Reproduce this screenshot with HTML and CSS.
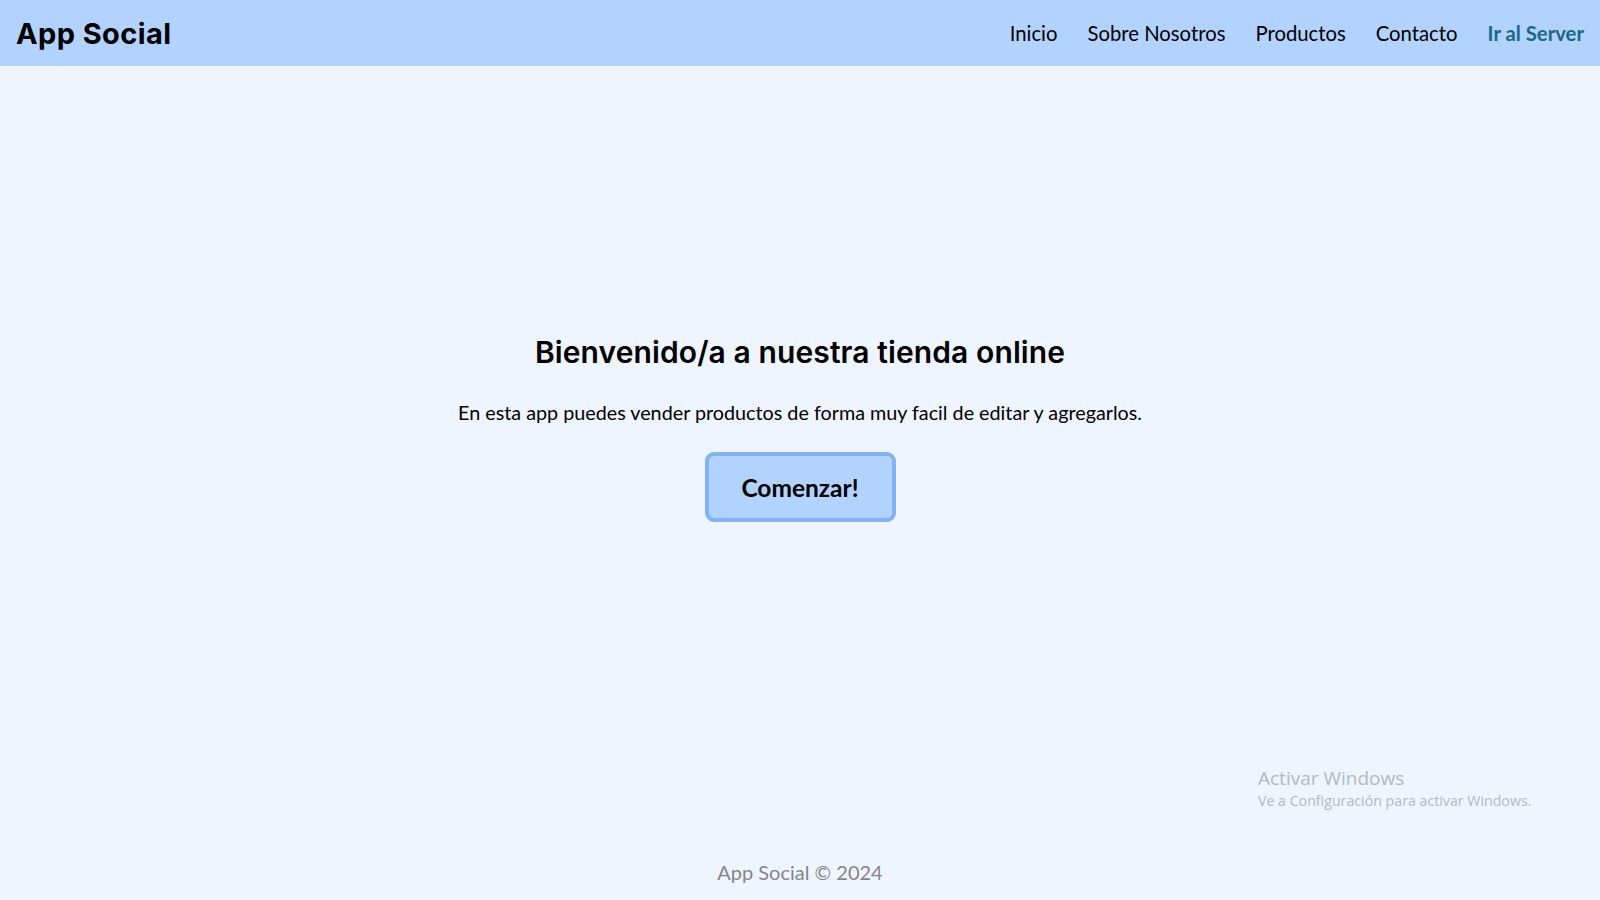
FILE: index.html
```html
<!DOCTYPE html>
<html lang="es">
<head>
<meta charset="utf-8">
<title>App Social</title>
<link rel="stylesheet" href="styles.css">
</head>
<body>
<header class="topbar">
  <div class="brand">App Social</div>
  <nav class="nav">
    <a class="nav-link" href="#">Inicio</a>
    <a class="nav-link" href="#">Sobre Nosotros</a>
    <a class="nav-link" href="#">Productos</a>
    <a class="nav-link" href="#">Contacto</a>
    <a class="nav-link nav-server" href="#">Ir al Server</a>
  </nav>
</header>
<main class="hero">
  <h1 class="hero-title">Bienvenido/a a nuestra tienda online</h1>
  <p class="hero-text">En esta app puedes vender productos de forma muy facil de editar y agregarlos.</p>
  <button class="hero-btn">Comenzar!</button>
</main>
<footer class="footer">App Social © 2024</footer>
<div class="watermark">
  <div class="wm-title">Activar Windows</div>
  <div class="wm-sub">Ve a Configuración para activar Windows.</div>
</div>
</body>
</html>
```
FILE: styles.css
```css
* { box-sizing: border-box; }
html, body { margin: 0; padding: 0; }
body {
  background: #eef5ff;
  font-family: Lato, "Liberation Sans", sans-serif;
  color: #000;
  min-height: 100vh;
  display: flex;
  flex-direction: column;
}
.topbar {
  height: 66px;
  background: #b2d2ff;
  display: flex;
  align-items: center;
  justify-content: space-between;
  padding: 0 16px;
}
.brand {
  font-family: Inter, "Open Sans", sans-serif;
  font-weight: 700;
  font-size: 29px;
  letter-spacing: 0.4px;
}
.nav {
  display: flex;
  gap: 30px;
}
.nav-link {
  color: #000;
  text-decoration: none;
  font-size: 20.3px;
}
.nav-server {
  font-weight: 700;
  color: #1a6984;
}
.hero {
  flex: 1;
  display: flex;
  flex-direction: column;
  align-items: center;
  justify-content: center;
  padding-bottom: 54px;
}
.hero-title {
  font-family: Inter, "Open Sans", sans-serif;
  font-weight: 600;
  font-size: 30px;
  letter-spacing: 0.1px;
  margin: 0 0 31px;
}
.hero-text {
  font-size: 19.75px;
  margin: 0 0 28px;
}
.hero-btn {
  width: 191px;
  height: 70px;
  background: #b2d2ff;
  border: 4px solid #82b1f4;
  border-radius: 9px;
  font-family: Lato, sans-serif;
  font-weight: 700;
  font-size: 24.5px;
  color: #000;
}
.footer {
  height: 56px;
  display: flex;
  align-items: center;
  justify-content: center;
  color: #858585;
  font-size: 20px;
}
.watermark {
  position: absolute;
  left: 1258px;
  top: 765px;
  color: #b5b9c0;
  font-family: "Open Sans", sans-serif;
}
.wm-title { font-size: 19px; line-height: 26px; }
.wm-sub { font-size: 14.2px; line-height: 20px; }
```
